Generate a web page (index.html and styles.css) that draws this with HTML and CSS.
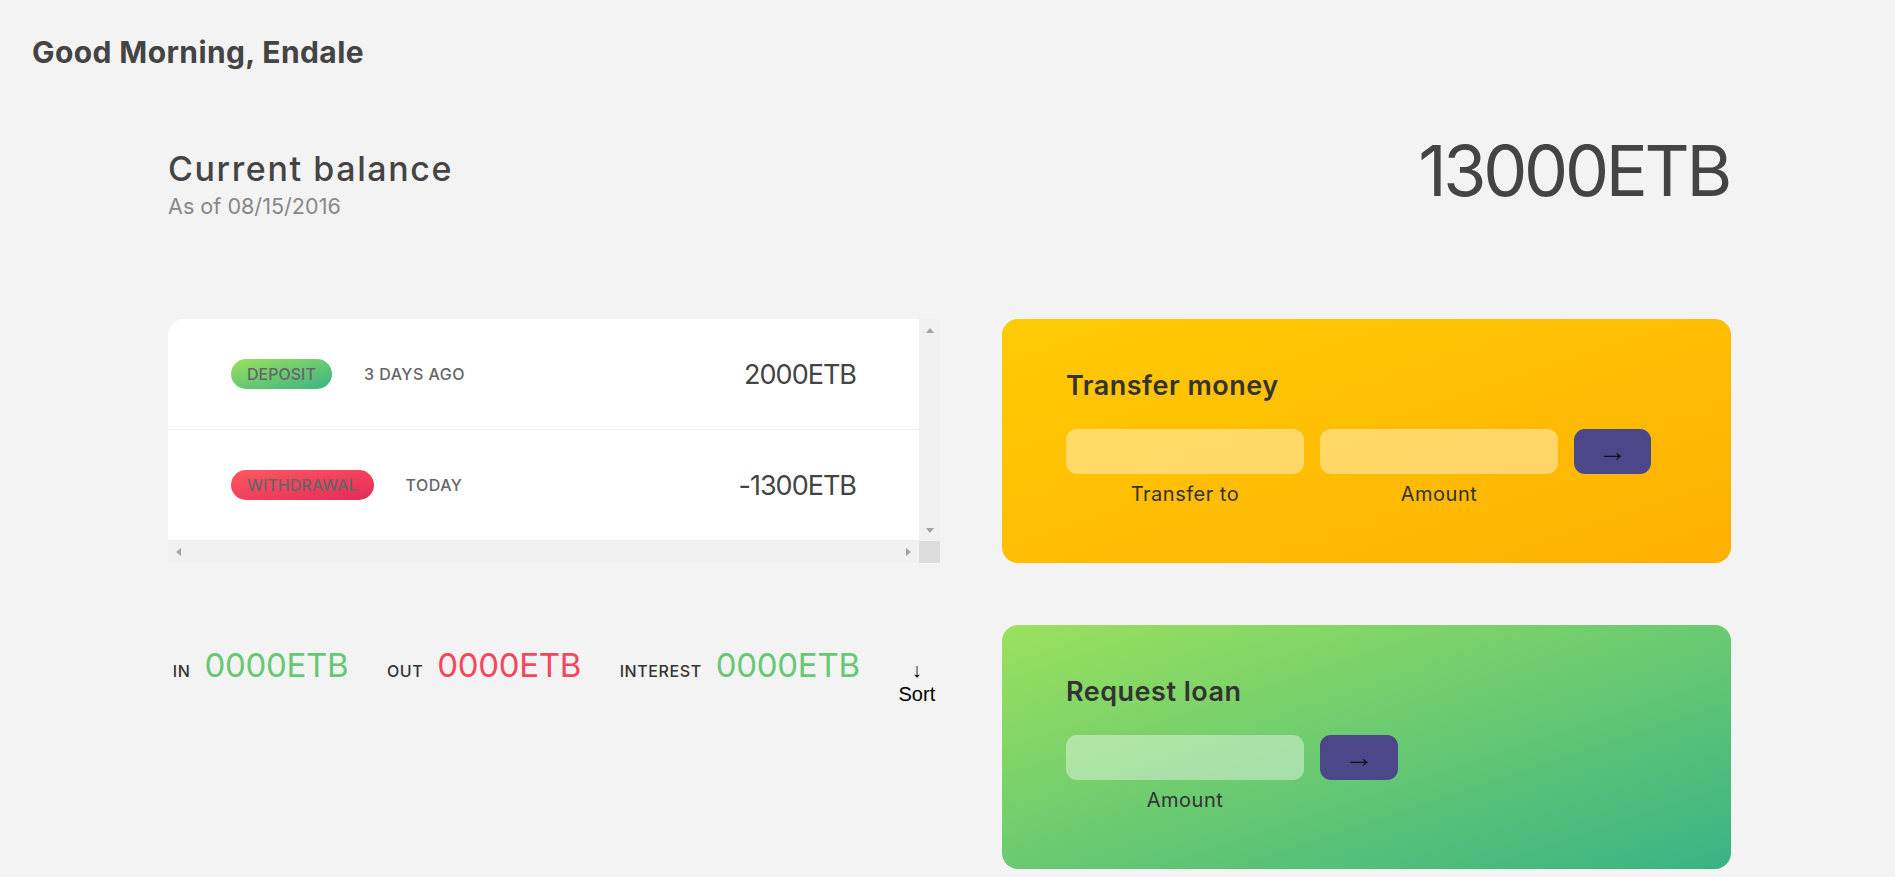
FILE: index.html
```html
<!DOCTYPE html>
<html lang="en">
<head>
<meta charset="UTF-8">
<title>Bankist</title>
<link rel="stylesheet" href="styles.css">
</head>
<body>
  <nav class="nav">
    <p class="welcome">Good Morning, Endale</p>
  </nav>

  <main class="app">
    <div class="balance">
      <div class="balance__info">
        <p class="balance__label">Current balance</p>
        <p class="balance__date">As of <span class="date">08/15/2016</span></p>
      </div>
      <p class="balance__value">13000ETB</p>
    </div>

    <div class="movements">
      <div class="movements__list">
        <div class="movements__row">
          <div class="movements__type movements__type--deposit">deposit</div>
          <div class="movements__date">3 days ago</div>
          <div class="movements__value">2000ETB</div>
        </div>
        <div class="movements__row">
          <div class="movements__type movements__type--withdrawal">withdrawal</div>
          <div class="movements__date">today</div>
          <div class="movements__value">-1300ETB</div>
        </div>
      </div>
      <div class="scrollbar scrollbar--v">
        <span class="arrow arrow--up"></span>
        <span class="arrow arrow--down"></span>
      </div>
      <div class="scrollbar scrollbar--h">
        <span class="arrow arrow--left"></span>
        <span class="arrow arrow--right"></span>
      </div>
      <div class="scrollbar__corner"></div>
    </div>

    <div class="operation operation--transfer">
      <h2 class="operation__title">Transfer money</h2>
      <form class="form form--transfer">
        <input type="text" class="form__input">
        <input type="number" class="form__input">
        <button type="button" class="form__btn">&rarr;</button>
        <label class="form__label">Transfer to</label>
        <label class="form__label">Amount</label>
      </form>
    </div>

    <div class="summary">
      <p class="summary__label">In</p>
      <p class="summary__value summary__value--in">0000ETB</p>
      <p class="summary__label">Out</p>
      <p class="summary__value summary__value--out">0000ETB</p>
      <p class="summary__label">Interest</p>
      <p class="summary__value summary__value--interest">0000ETB</p>
      <button type="button" class="btn--sort">&darr; Sort</button>
    </div>

    <div class="operation operation--loan">
      <h2 class="operation__title">Request loan</h2>
      <form class="form form--loan">
        <input type="number" class="form__input">
        <button type="button" class="form__btn">&rarr;</button>
        <label class="form__label form__label--loan">Amount</label>
      </form>
    </div>
  </main>
</body>
</html>
```

FILE: styles.css
```css
* {
  margin: 0;
  padding: 0;
  box-sizing: border-box;
}

body {
  font-family: "Inter", "Noto Sans", sans-serif;
  color: #444;
  background-color: #f3f3f3;
  padding-top: 32px;
}

.nav {
  display: flex;
  align-items: center;
  padding: 0 32px;
}

.welcome {
  font-size: 30px;
  font-weight: 700;
  line-height: 41px;
  letter-spacing: 0.4px;
  color: #444;
}

.app {
  width: 1563px;
  margin: 47px 0 0 168px;
  display: grid;
  grid-template-columns: 772px 729px;
  grid-template-rows: auto 244px 244px;
  column-gap: 62px;
  row-gap: 62px;
}

/* Balance */
.balance {
  grid-column: 1 / -1;
  display: flex;
  align-items: flex-end;
  justify-content: space-between;
  margin-bottom: 36px;
}

.balance__label {
  font-size: 34px;
  font-weight: 500;
  line-height: 48px;
  letter-spacing: 1.6px;
  margin-bottom: -2px;
}

.balance__date {
  font-size: 21.6px;
  line-height: 30px;
  color: #888;
}

.balance__value {
  font-size: 70px;
  font-weight: 400;
  line-height: 101px;
  letter-spacing: -3.3px;
  margin-right: 2px;
}

/* Movements */
.movements {
  grid-column: 1;
  grid-row: 2;
  display: grid;
  grid-template-columns: 1fr 21px;
  grid-template-rows: 1fr 22px;
}

.movements__list {
  background-color: #fff;
  border-top-left-radius: 16px;
  overflow: hidden;
}

.scrollbar {
  background-color: #f1f1f1;
  display: flex;
  justify-content: space-between;
  align-items: center;
}

.scrollbar--v {
  flex-direction: column;
  padding: 8.5px 0 8px;
}

.scrollbar--h {
  padding: 0 8px 0 7.7px;
}

.scrollbar__corner {
  background-color: #dcdcdc;
}

.arrow {
  display: block;
  width: 0;
  height: 0;
}

.arrow--up {
  border-left: 4.5px solid transparent;
  border-right: 4.5px solid transparent;
  border-bottom: 5px solid #a3a3a3;
}

.arrow--down {
  border-left: 4.5px solid transparent;
  border-right: 4.5px solid transparent;
  border-top: 5px solid #a3a3a3;
}

.arrow--left {
  border-top: 4.5px solid transparent;
  border-bottom: 4.5px solid transparent;
  border-right: 5px solid #a3a3a3;
}

.arrow--right {
  border-top: 4.5px solid transparent;
  border-bottom: 4.5px solid transparent;
  border-left: 5px solid #a3a3a3;
}

.movements__row {
  height: 111px;
  padding: 0 63px;
  display: flex;
  align-items: center;
  border-bottom: 1px solid #eee;
}

.movements__type {
  font-size: 16px;
  font-weight: 500;
  line-height: 30px;
  text-transform: uppercase;
  color: #666;
  padding: 0 16px;
  border-radius: 100px;
  margin-right: 32px;
}

.movements__type--deposit {
  background-image: linear-gradient(to top left, #39b385, #9be15d);
}

.movements__type--withdrawal {
  background-image: linear-gradient(to top left, #e52a5a, #ff585f);
}

.movements__date {
  font-size: 16px;
  font-weight: 500;
  letter-spacing: 0.5px;
  text-transform: uppercase;
  color: #666;
}

.movements__value {
  font-size: 27px;
  letter-spacing: -1px;
  margin-left: auto;
  color: #444;
}

/* Summary */
.summary {
  grid-column: 1;
  grid-row: 3;
  align-self: start;
  display: flex;
  align-items: baseline;
  padding: 0 4.8px;
  margin-top: 17px;
}

.summary__label {
  font-size: 16px;
  font-weight: 500;
  letter-spacing: 0.6px;
  text-transform: uppercase;
  margin-right: 14px;
  color: #333;
}

.summary__value {
  font-size: 33px;
  line-height: 46px;
  letter-spacing: -0.3px;
  margin-right: 38.5px;
}

.summary__value--in,
.summary__value--interest {
  color: #66c873;
}

.summary__value--out {
  color: #f5465d;
}

.btn--sort {
  margin-left: auto;
  flex-shrink: 0;
  border: none;
  background: none;
  font-family: "Liberation Sans", Arial, sans-serif;
  font-size: 20px;
  line-height: 24px;
  width: min-content;
  text-align: center;
  color: #000;
  padding: 0;
}

/* Operations */
.operation {
  border-radius: 16px;
  padding: 48px 64px;
  color: #333;
}

.operation--transfer {
  grid-column: 2;
  grid-row: 2;
  background-image: linear-gradient(to top left, #ffb003, #ffcb03);
}

.operation--loan {
  grid-column: 2;
  grid-row: 3;
  background-image: linear-gradient(to top left, #39b385, #9be15d);
}

.operation__title {
  font-size: 27px;
  font-weight: 600;
  line-height: 38px;
  letter-spacing: 0.5px;
  margin-bottom: 24px;
  color: #333;
}

.form {
  display: grid;
  grid-template-columns: 238px 238px 77px;
  grid-template-rows: 45px auto;
  column-gap: 16px;
  row-gap: 6px;
}

.form--loan {
  grid-template-columns: 238px 78px;
}

.form__input {
  border: none;
  background-color: rgba(255, 255, 255, 0.4);
  border-radius: 11px;
  font-family: inherit;
  font-size: 24px;
  text-align: center;
  color: #333;
  padding: 0 16px;
  width: 100%;
}

.form__btn {
  border: none;
  border-radius: 11px;
  background-color: #4b4788;
  font-family: "Liberation Sans", Arial, sans-serif;
  font-size: 29px;
  color: #111;
}

.form__label {
  font-size: 20px;
  line-height: 29px;
  letter-spacing: 0.5px;
  text-align: center;
  color: #333;
}

.form__label--loan {
  grid-row: 2;
  grid-column: 1;
}
```
